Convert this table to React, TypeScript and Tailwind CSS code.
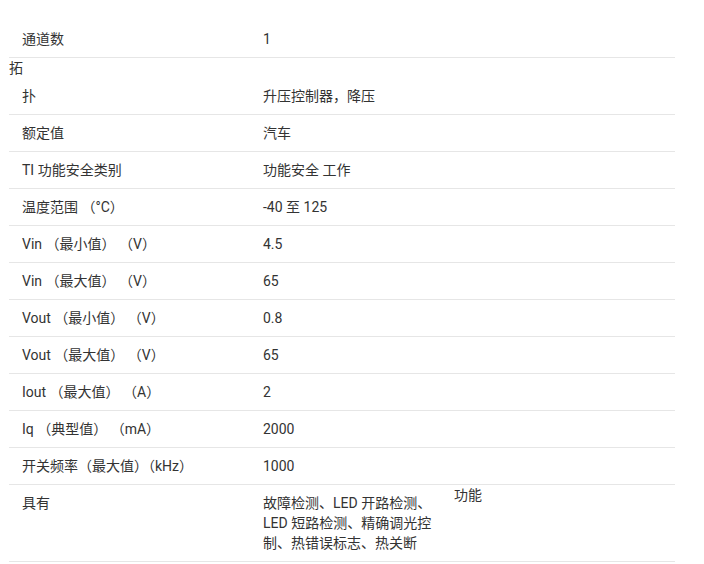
const rows: [string, string][] = [
  ["额定值", "汽车"],
  ["TI 功能安全类别", "功能安全 工作"],
  ["温度范围 （°C）", "-40 至 125"],
  ["Vin （最小值） （V）", "4.5"],
  ["Vin （最大值） （V）", "65"],
  ["Vout （最小值） （V）", "0.8"],
  ["Vout （最大值） （V）", "65"],
  ["Iout （最大值） （A）", "2"],
  ["Iq （典型值） （mA）", "2000"],
  ["开关频率（最大值）（kHz）", "1000"],
];

function Row({ label, value }: { label: string; value: string }) {
  return (
    <div className="flex h-[37px] items-center border-b border-[#e6e6e6]">
      <div className="w-[254px] pl-[13px]">{label}</div>
      <div>{value}</div>
    </div>
  );
}

export default function App() {
  return (
    <div
      className="min-h-[564px] bg-white pt-[21px] text-[14px] leading-[20px] text-[#333333]"
      style={{ fontFamily: 'Roboto, "Noto Sans CJK SC", sans-serif' }}
    >
      <div className="ml-[9px] w-[666px]">
        <Row label="通道数" value="1" />

        <div className="border-b border-[#e6e6e6]">
          <div>拓</div>
          <div className="flex h-[36px] items-center">
            <div className="w-[254px] pl-[13px]">扑</div>
            <div>升压控制器，降压</div>
          </div>
        </div>

        {rows.map(([label, value]) => (
          <Row key={label} label={label} value={value} />
        ))}

        <div className="flex items-start border-b border-[#e6e6e6] pb-[8px]">
          <div className="w-[254px] pl-[13px] pt-[8px]">具有</div>
          <div className="w-[180px] pt-[8px]">
            故障检测、LED 开路检测、LED 短路检测、精确调光控制、热错误标志、热关断
          </div>
          <div className="ml-[11px] pt-0">功能</div>
        </div>
      </div>
    </div>
  );
}
